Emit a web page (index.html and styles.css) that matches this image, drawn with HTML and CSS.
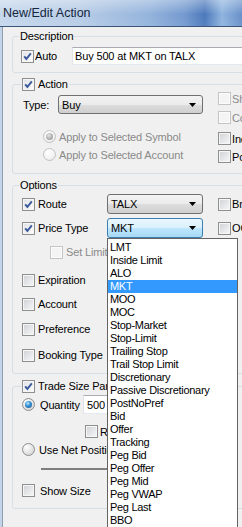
FILE: index.html
```html
<!DOCTYPE html>
<html>
<head>
<meta charset="utf-8">
<title>New/Edit Action</title>
<link rel="stylesheet" href="styles.css">
</head>
<body>
<div class="window">
  <div class="titlebar"><span class="title">New/Edit Action</span></div>
  <div class="frame">
    <div class="edge"></div>
    <div class="dialog">

      <fieldset class="group g-desc">
        <legend class="lg lg-text">Description</legend>
        <div class="desc-row">
          <span class="cb on"><svg width="11" height="11" viewBox="0 0 11 11"><path d="M2.2 5.3 L4.4 7.9 L8.8 2.4" fill="none" stroke="#3a5a9c" stroke-width="1.9"/></svg></span>
          <span class="auto">Auto</span>
          <span class="tb desc-tb">Buy 500 at MKT on TALX</span>
        </div>
      </fieldset>

      <fieldset class="group g-action">
        <legend class="lg lg-cb"><span class="cb on"><svg width="11" height="11" viewBox="0 0 11 11"><path d="M2.2 5.3 L4.4 7.9 L8.8 2.4" fill="none" stroke="#3a5a9c" stroke-width="1.9"/></svg></span><span class="lg-t">Action</span></legend>
        <div class="action-body">
          <div class="action-left">
            <div class="type-row">
              <span class="type-lbl">Type:</span>
              <span class="sel sel-buy"><span>Buy</span><svg class="arr" width="7" height="4" viewBox="0 0 7 4"><path d="M0 0 H7 L3.5 4 Z" fill="#000"/></svg></span>
            </div>
            <div class="radio-row r1"><span class="rb dis on"></span><span class="dis-t rtxt">Apply to Selected Symbol</span></div>
            <div class="radio-row r2"><span class="rb dis"></span><span class="dis-t rtxt">Apply to Selected Account</span></div>
          </div>
          <div class="action-right">
            <div class="rc"><span class="cb dis"></span><span class="dis-t rc-t">Short Sell</span></div>
            <div class="rc rc2"><span class="cb dis"></span><span class="dis-t rc-t">Cover</span></div>
            <div class="rc rc3"><span class="cb"></span><span class="rc-t">Include</span></div>
            <div class="rc rc4"><span class="cb"></span><span class="rc-t">Position</span></div>
          </div>
        </div>
      </fieldset>

      <fieldset class="group g-opt">
        <legend class="lg lg-text">Options</legend>
        <div class="opt-body">
          <div class="opt-row">
            <span class="ck-lbl"><span class="cb on"><svg width="11" height="11" viewBox="0 0 11 11"><path d="M2.2 5.3 L4.4 7.9 L8.8 2.4" fill="none" stroke="#3a5a9c" stroke-width="1.9"/></svg></span><span class="ck-t">Route</span></span>
            <span class="sel sel-opt"><span>TALX</span><svg class="arr" width="7" height="4" viewBox="0 0 7 4"><path d="M0 0 H7 L3.5 4 Z" fill="#000"/></svg></span>
            <span class="rcheck"><span class="cb"></span><span class="rc-t">Bracket</span></span>
          </div>
          <div class="opt-row">
            <span class="ck-lbl"><span class="cb on"><svg width="11" height="11" viewBox="0 0 11 11"><path d="M2.2 5.3 L4.4 7.9 L8.8 2.4" fill="none" stroke="#3a5a9c" stroke-width="1.9"/></svg></span><span class="ck-t">Price Type</span></span>
            <span class="sel sel-opt focus"><span>MKT</span><svg class="arr" width="7" height="4" viewBox="0 0 7 4"><path d="M0 0 H7 L3.5 4 Z" fill="#000"/></svg></span>
            <span class="rcheck"><span class="cb"></span><span class="rc-t">OCO</span></span>
          </div>
          <div class="opt-row sub">
            <span class="ck-lbl"><span class="cb dis"></span><span class="ck-t dis-t">Set Limit</span></span>
          </div>
          <div class="opt-row mt8">
            <span class="ck-lbl"><span class="cb"></span><span class="ck-t">Expiration</span></span>
          </div>
          <div class="opt-row">
            <span class="ck-lbl"><span class="cb"></span><span class="ck-t">Account</span></span>
          </div>
          <div class="opt-row mt5">
            <span class="ck-lbl"><span class="cb"></span><span class="ck-t">Preference</span></span>
          </div>
          <div class="opt-row mt6">
            <span class="ck-lbl"><span class="cb"></span><span class="ck-t">Booking Type</span></span>
          </div>
        </div>
      </fieldset>

      <fieldset class="group g-ts">
        <legend class="lg lg-cb"><span class="cb on"><svg width="11" height="11" viewBox="0 0 11 11"><path d="M2.2 5.3 L4.4 7.9 L8.8 2.4" fill="none" stroke="#3a5a9c" stroke-width="1.9"/></svg></span><span class="lg-t ts-t">Trade Size Parameters</span></legend>
        <div class="ts-body">
          <div class="q-row">
            <span class="rb on"></span><span class="q-lbl">Quantity</span>
            <span class="tb q-tb">500</span>
          </div>
          <div class="r-row"><span class="cb"></span><span class="r-t">Round Lot</span></div>
          <div class="net-row"><span class="rb"></span><span class="net-t">Use Net Position</span></div>
          <div class="slider"></div>
          <div class="ss-row"><span class="cb"></span><span class="ss-t">Show Size</span></div>
        </div>
      </fieldset>

    </div>
  </div>

  <div class="dd-list">
    <div class="dd-item">LMT</div>
    <div class="dd-item">Inside Limit</div>
    <div class="dd-item">ALO</div>
    <div class="dd-item hl">MKT</div>
    <div class="dd-item">MOO</div>
    <div class="dd-item">MOC</div>
    <div class="dd-item">Stop-Market</div>
    <div class="dd-item">Stop-Limit</div>
    <div class="dd-item">Trailing Stop</div>
    <div class="dd-item">Trail Stop Limit</div>
    <div class="dd-item">Discretionary</div>
    <div class="dd-item">Passive Discretionary</div>
    <div class="dd-item">PostNoPref</div>
    <div class="dd-item">Bid</div>
    <div class="dd-item">Offer</div>
    <div class="dd-item">Tracking</div>
    <div class="dd-item">Peg Bid</div>
    <div class="dd-item">Peg Offer</div>
    <div class="dd-item">Peg Mid</div>
    <div class="dd-item">Peg VWAP</div>
    <div class="dd-item">Peg Last</div>
    <div class="dd-item">BBO</div>
  </div>
</div>
</body>
</html>
```

FILE: styles.css
```css
html, body {
  margin: 0;
  padding: 0;
}
body {
  width: 242px;
  height: 527px;
  overflow: hidden;
  background: #f0f0f0;
  font-family: "Liberation Sans", Arial, sans-serif;
  font-size: 11px;
  letter-spacing: -0.15px;
  color: #000;
}
.window {
  position: relative;
  width: 340px;
  height: 527px;
  display: flex;
  flex-direction: column;
}
.titlebar {
  flex: none;
  height: 26px;
  border-bottom: 1px solid #3b5579;
  display: flex;
  align-items: center;
  padding-left: 3px;
  background:
    linear-gradient(180deg, rgba(255,255,255,0.35), rgba(255,255,255,0) 55%, rgba(255,255,255,0.05)),
    linear-gradient(90deg, #c5d7ec 0px, #b7cce6 80px, #93b3dc 150px, #7399cf 185px, #4c79bb 205px, #8fb4df 222px, #6890c9 242px, #6890c9 340px);
}
.title {
  font-size: 12.5px;
  letter-spacing: 0;
  color: #16263d;
}
.frame {
  flex: 1;
  display: flex;
}
.edge {
  flex: none;
  width: 3px;
  background: linear-gradient(90deg, #c3d4e9 0, #c3d4e9 2px, #8e9eb3 2px);
}
.dialog {
  flex: 1;
  padding-top: 3px;
}

/* group boxes */
.group {
  margin: 0 0 0 9px;
  width: 320px;
  box-sizing: border-box;
  border: 1px solid #d5dfe5;
  border-radius: 3px;
  padding: 0;
  min-width: 0;
}
.lg {
  line-height: 13px;
  height: 13px;
  padding: 0 1px;
  display: flex;
  align-items: center;
}
.lg-text { margin-left: 6px; }
.lg-cb { margin-left: 8px; }
.lg-t { margin-left: 3px; }
.ts-t {
  width: 69px;
  overflow: hidden;
  white-space: nowrap;
}

/* controls */
.cb {
  flex: none;
  position: relative;
  width: 13px;
  height: 13px;
  box-sizing: border-box;
  border: 1px solid #8e8f8f;
  background: linear-gradient(135deg, #cdd0d5 0%, #e4e5e7 50%, #f7f7f7 100%);
  box-shadow: inset 0 0 0 1px #f6f6f6;
  display: inline-block;
}
.cb svg { display: block; }
.cb.on {
  background: linear-gradient(135deg, #e0e2e6 0%, #f3f3f4 60%, #fbfbfb 100%);
}
.cb.dis {
  border-color: #c4c4c4;
  background: #f4f4f4;
  box-shadow: inset 0 0 0 1px #fcfcfc;
}
.rb {
  flex: none;
  position: relative;
  width: 13px;
  height: 13px;
  box-sizing: border-box;
  border: 1px solid #8e8f8f;
  border-radius: 50%;
  background: radial-gradient(circle at 35% 30%, #ffffff 0%, #e8e8e8 45%, #c8cacd 100%);
  display: inline-block;
}
.rb.on::after {
  content: "";
  position: absolute;
  left: 2px;
  top: 2px;
  width: 7px;
  height: 7px;
  border-radius: 50%;
  background: radial-gradient(circle at 40% 35%, #bfe8fc 0%, #3a94d4 40%, #1a4f88 100%);
}
.rb.dis {
  border-color: #c2c2c2;
  background: radial-gradient(circle at 35% 30%, #ffffff 0%, #f2f2f2 60%, #e2e2e2 100%);
}
.rb.dis.on::after {
  background: radial-gradient(circle at 40% 35%, #e6e6e6 0%, #b0b0b0 55%, #8f8f8f 100%);
}
.dis-t { color: #8a8a8a; }

.sel {
  flex: none;
  height: 19px;
  box-sizing: border-box;
  border: 1px solid #707070;
  border-radius: 3px;
  background: linear-gradient(180deg, #f3f3f3 0%, #ebebeb 50%, #dddddd 51%, #cfcfcf 100%);
  display: flex;
  align-items: center;
  padding-left: 3px;
  white-space: nowrap;
}
.sel .arr {
  margin-left: auto;
  margin-right: 6px;
  flex: none;
}
.sel.focus {
  border-color: #3c7fb1;
  background: linear-gradient(180deg, #eaf6fd 0%, #d9f0fc 50%, #bee6fd 51%, #a7d9f5 100%);
}
.tb {
  flex: none;
  box-sizing: border-box;
  border: 1px solid;
  border-color: #abadb3 #dbdfe6 #e3e9ef #e2e3ea;
  background: #fff;
  white-space: nowrap;
  display: flex;
  align-items: center;
}

/* description */
.g-desc { padding: 4px 0 7px 0; }
.desc-row {
  display: flex;
  align-items: center;
  height: 18px;
  padding-left: 8px;
}
.auto {
  margin-left: 1px;
  width: 37px;
}
.desc-tb {
  height: 18px;
  width: 250px;
  padding-left: 2px;
}

/* action */
.g-action {
  margin-top: 5px;
  padding: 1px 0 10px 0;
}
.action-body {
  display: flex;
  padding-left: 10px;
}
.action-left {
  width: 195px;
  padding-top: 3px;
}
.type-row {
  display: flex;
  align-items: center;
  height: 19px;
}
.type-lbl { width: 35px; }
.sel-buy { width: 145px; }
.radio-row {
  display: flex;
  align-items: center;
  height: 13px;
  padding-left: 20px;
  white-space: nowrap;
}
.r1 { margin-top: 16px; }
.r2 { margin-top: 5px; }
.rtxt { margin-left: 3px; }
.action-right {
  display: flex;
  flex-direction: column;
}
.rc {
  display: flex;
  align-items: center;
  height: 13px;
  white-space: nowrap;
}
.rc2 { margin-top: 6px; }
.rc3 { margin-top: 8px; }
.rc4 { margin-top: 5px; }
.rc-t { margin-left: 1px; }

/* options */
.g-opt {
  margin-top: 5px;
  padding: 2px 0 8px 0;
}
.opt-body { padding-left: 9px; }
.opt-row {
  display: flex;
  align-items: center;
  height: 20px;
  margin-top: 4px;
  white-space: nowrap;
}
.opt-row:first-child { margin-top: 0; }
.opt-row.mt8 { margin-top: 8px; }
.opt-row.mt5 { margin-top: 5px; }
.opt-row.mt6 { margin-top: 6px; }
.opt-row.sub { padding-left: 28px; }
.ck-lbl {
  flex: none;
  display: flex;
  align-items: center;
  width: 85px;
  overflow: hidden;
}
.sub .ck-lbl { width: 57px; }
.ck-t { margin-left: 3px; }
.sel-opt {
  width: 96px;
  height: 20px;
}
.rcheck {
  display: flex;
  align-items: center;
  margin-left: 15px;
}

/* trade size */
.g-ts {
  margin-top: 6px;
  padding: 2px 0 11px 0;
}
.ts-body { padding-left: 9px; }
.q-row {
  display: flex;
  align-items: center;
  height: 19px;
}
.q-lbl {
  margin-left: 5px;
  width: 43px;
}
.q-tb {
  width: 24px;
  height: 19px;
  padding-left: 3px;
  border-right: none;
  overflow: hidden;
}
.r-row {
  display: flex;
  align-items: center;
  height: 13px;
  margin-top: 11px;
  padding-left: 63px;
  white-space: nowrap;
}
.r-t {
  margin-left: 2px;
  width: 7px;
  overflow: hidden;
}
.net-row {
  display: flex;
  align-items: center;
  height: 13px;
  margin-top: 5px;
  white-space: nowrap;
}
.net-t {
  margin-left: 4px;
  width: 68px;
  overflow: hidden;
}
.slider {
  margin-top: 12px;
  margin-left: 19px;
  width: 120px;
  height: 2px;
  background: #7f7f7f;
}
.ss-row {
  display: flex;
  align-items: center;
  height: 13px;
  margin-top: 14px;
  white-space: nowrap;
}
.ss-t { margin-left: 5px; }

/* dropdown list (overlay) */
.dd-list {
  position: absolute;
  left: 107px;
  top: 238px;
  width: 131px;
  height: 300px;
  box-sizing: border-box;
  border: 1px solid #646464;
  background: #fff;
  padding-top: 2px;
  z-index: 5;
}
.dd-item {
  height: 13px;
  line-height: 13px;
  padding-left: 2px;
  white-space: nowrap;
  letter-spacing: -0.3px;
}
.dd-item.hl {
  background: #3399ff;
  color: #fff;
}
```
